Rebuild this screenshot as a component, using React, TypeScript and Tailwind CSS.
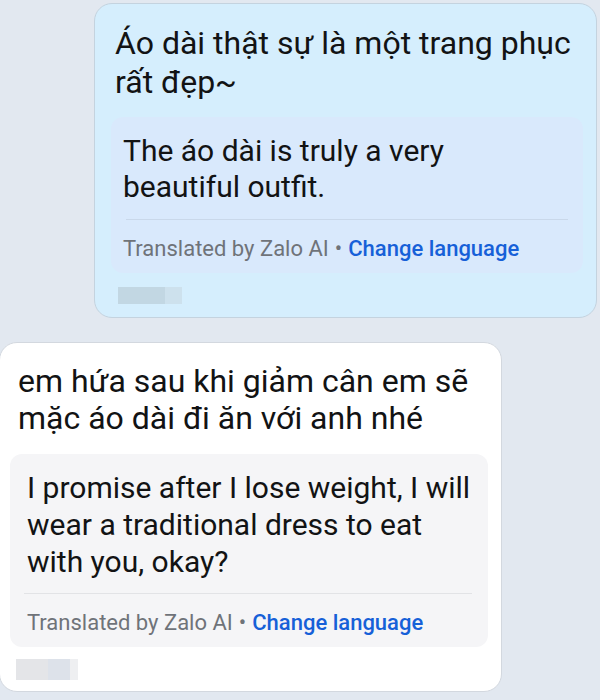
import React from 'react';

const font = { fontFamily: 'Roboto, "Noto Sans", sans-serif' };

const Footer = () => (
  <div className="text-[22px] leading-[28px] whitespace-nowrap">
    <span className="text-[#6f7379]">Translated by Zalo AI</span>
    <span className="text-[#6f7379] mx-[6px]">•</span>
    <span className="text-[#1660d8] font-medium">Change language</span>
  </div>
);

export default function App() {
  return (
    <div className="w-[600px] h-[700px] bg-[#e2e8f0] overflow-hidden flex flex-col" style={font}>
      {/* sent message */}
      <div className="ml-[94px] mt-[3px] w-[503px] h-[315px] rounded-[18px] bg-[#d5eefd] border border-[#c4d3df] flex flex-col">
        <div className="pl-[20px] pr-[10px] pt-[20px] text-[32px] leading-[39px] text-[#121314]">
          Áo dài thật sự là một trang phục rất đẹp~
        </div>
        <div className="ml-[16px] mr-[13px] mt-[15px] rounded-[12px] bg-[#d9e9fc] px-[15px] pt-[16px] pb-[10px]">
          <div className="-ml-[3px] text-[30px] leading-[36px] text-[#121314] pr-[110px]">
            The áo dài is truly a very beautiful outfit.
          </div>
          <div className="mt-[14px] h-px bg-[#c9d8ea]" />
          <div className="mt-[15px] -ml-[3px]">
            <Footer />
          </div>
        </div>
        <div className="ml-[23px] mt-[14px] flex h-[17px]">
          <div className="w-[47px] bg-[#c2d7e3]" />
          <div className="w-[17px] bg-[#cde1ed]" />
        </div>
      </div>

      {/* received message */}
      <div className="-ml-[1px] mt-[24px] w-[503px] h-[350px] rounded-[18px] bg-white border border-[#d3d8df] flex flex-col">
        <div className="pl-[18px] pr-[10px] pt-[20px] text-[32px] leading-[37px] text-[#121314]">
          em hứa sau khi giảm cân em sẽ mặc áo dài đi ăn với anh nhé
        </div>
        <div className="ml-[10px] mr-[13px] mt-[17px] rounded-[12px] bg-[#f5f5f7] pl-[17px] pr-[8px] pt-[15px] pb-[10px]">
          <div className="text-[30px] leading-[37px] text-[#121314]">
            I promise after I lose weight, I will wear a traditional dress to eat with you, okay?
          </div>
          <div className="mt-[13px] mr-[8px] -ml-[3px] h-px bg-[#e2e3e6]" />
          <div className="mt-[15px]">
            <Footer />
          </div>
        </div>
        <div className="ml-[16px] mt-[12px] flex h-[21px]">
          <div className="w-[32px] bg-[#e4e5e8]" />
          <div className="w-[22px] bg-[#dde2ea]" />
          <div className="w-[8px] bg-[#eeeff1]" />
        </div>
      </div>
    </div>
  );
}
